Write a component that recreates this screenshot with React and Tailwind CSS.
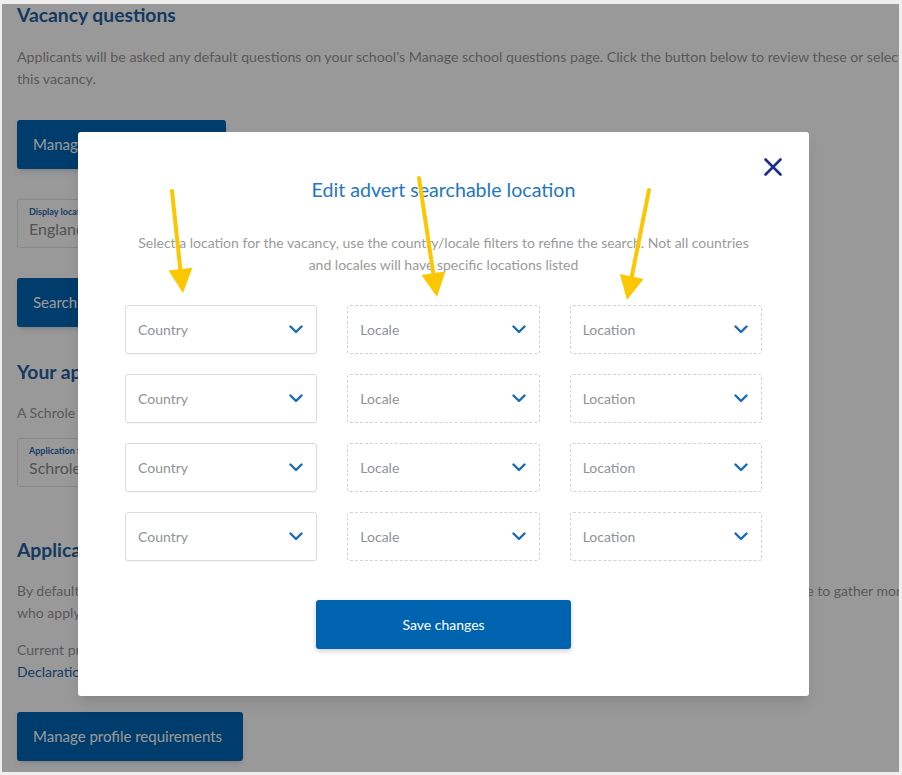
import React from 'react';

const rows = [0, 1, 2, 3];

const Chevron = () => (
    <svg width="14" height="9" viewBox="0 0 14 9" fill="none">
        <path d="M1.5 1.5 L7 7 L12.5 1.5" stroke="#1a6bb5" strokeWidth="2.4" strokeLinecap="round" strokeLinejoin="round" />
    </svg>
);

const SelectBox = ({ label, dashed }) => (
    <div
        className={`h-[49px] flex items-center justify-between pl-[12px] pr-[13px] rounded-[3px] bg-white ${
            dashed ? 'border border-dashed border-[#cfd2d6]' : 'border border-[#d8dbdf] shadow-[0_1px_1px_rgba(0,0,0,0.04)]'
        }`}
    >
        <span className="text-[14px] text-[#8f9297]">{label}</span>
        <Chevron />
    </div>
);

const App = () => {
    return (
        <div className="w-[902px] h-[775px] bg-[#efefef] pt-[4px] pl-[2px] pr-[3px] pb-[3px] font-['Lato','Open_Sans',sans-serif] relative overflow-hidden">
            <div className="relative w-full h-full bg-white overflow-hidden">
                {/* page behind the dialog */}
                <div className="px-[15px]">
                    <h2 className="text-[19.3px] leading-[24px] font-bold text-[#265f9f] -mt-px">Vacancy questions</h2>
                    <p className="mt-[19px] text-[14.2px] leading-[22px] text-[#969696] whitespace-nowrap">
                        Applicants will be asked any default questions on your school's Manage school questions page. Click the button below to review these or select additional questions for
                        <br />
                        this vacancy.
                    </p>
                    <button className="mt-[30px] h-[49px] w-[209px] rounded-[3px] bg-[#0064b4] text-white text-[15px] text-left px-[16px] shadow-md">
                        Manage vacancy questions
                    </button>
                    <div className="mt-[30px] h-[49px] w-[300px] rounded-[3px] border border-[#e3e3e3] px-[11px] pt-[6px]">
                        <div className="text-[9px] leading-[12px] font-bold text-[#2a66a8]">Display location</div>
                        <div className="text-[16px] leading-[22px] text-[#8a8a8a]">England, United Kingdom</div>
                    </div>
                    <button className="mt-[30px] h-[49px] w-[190px] rounded-[3px] bg-[#0064b4] text-white text-[15px] text-left px-[16px] shadow-md">
                        Search locations
                    </button>
                    <h2 className="mt-[33px] text-[19.3px] leading-[24px] font-bold text-[#265f9f]">Your application form</h2>
                    <p className="mt-[18px] text-[14px] leading-[22px] text-[#969696]">A Schrole Connect application form will be used for this vacancy.</p>
                    <div className="mt-[14px] h-[49px] w-[300px] rounded-[3px] border border-[#e3e3e3] px-[11px] pt-[6px]">
                        <div className="text-[9px] leading-[12px] font-bold text-[#2a66a8]">Application form</div>
                        <div className="text-[16px] leading-[22px] text-[#8a8a8a]">Schrole Connect</div>
                    </div>
                    <h2 className="mt-[51px] text-[19.3px] leading-[24px] font-bold text-[#265f9f]">Applicant profile requirements</h2>
                    <p className="mt-[18px] text-[14px] leading-[22px] text-[#969696] whitespace-nowrap">
                        By default, applicants will need to complete the standard profile sections before applying. Select additional sections you would like to gather more information on
                        <br />
                        who apply for this vacancy.
                    </p>
                    <p className="mt-[15px] text-[14px] leading-[22px] text-[#969696]">
                        Current profile requirements:
                        <br />
                        <span className="text-[#2a66a8]">Declaration, References, Qualifications</span>
                    </p>
                    <button className="mt-[29px] h-[49px] w-[226px] rounded-[3px] bg-[#0064b4] text-white text-[15px] text-left px-[16px] shadow-md">
                        Manage profile requirements
                    </button>
                </div>

                {/* backdrop */}
                <div className="absolute inset-0 bg-black/40" />

                {/* dialog */}
                <div className="absolute left-[76px] top-[128px] w-[731px] bg-white rounded-[3px] shadow-lg pt-[46px] pb-[47px] px-[47px]">
                    <button className="absolute top-[26px] right-[27px] w-[18px] h-[18px]">
                        <svg width="18" height="18" viewBox="0 0 18 18" fill="none">
                            <path d="M1.5 1.5 L16.5 16.5 M16.5 1.5 L1.5 16.5" stroke="#1d2b8e" strokeWidth="2.6" strokeLinecap="round" />
                        </svg>
                    </button>
                    <h3 className="text-center text-[19.6px] leading-[24px] text-[#2277bf]">Edit advert searchable location</h3>
                    <p className="mt-[30px] text-center text-[14px] leading-[22px] text-[#9a9a9a]">
                        Select a location for the vacancy, use the country/locale filters to refine the search. Not all countries
                        <br />
                        and locales will have specific locations listed
                    </p>
                    <div className="mt-[29px] grid grid-cols-3 gap-x-[30px] gap-y-[20px]">
                        {rows.map((r) => (
                            <React.Fragment key={r}>
                                <SelectBox label="Country" />
                                <SelectBox label="Locale" dashed />
                                <SelectBox label="Location" dashed />
                            </React.Fragment>
                        ))}
                    </div>
                    <div className="mt-[39px] flex justify-center">
                        <button className="h-[49px] w-[255px] rounded-[3px] bg-[#0063b0] text-white text-[14px] shadow-[0_2px_5px_rgba(0,0,0,0.2)]">
                            Save changes
                        </button>
                    </div>
                </div>
            </div>

            {/* yellow annotation arrows */}
            <svg className="absolute inset-0 pointer-events-none" width="902" height="775" viewBox="0 0 902 775">
                <g stroke="#fcc700" strokeWidth="4" strokeLinecap="round">
                    <line x1="172" y1="191" x2="180.4" y2="270" />
                    <line x1="419" y1="178" x2="433.4" y2="274" />
                    <line x1="649" y1="190" x2="631.7" y2="277" />
                </g>
                <g fill="#fcc700">
                    <polygon points="168.5,270.4 192.3,267.8 183,293" />
                    <polygon points="421.5,275.1 445.3,271.5 437,297" />
                    <polygon points="619.9,274.1 643.5,278.9 627,300" />
                </g>
            </svg>
        </div>
    );
};

export default App;
